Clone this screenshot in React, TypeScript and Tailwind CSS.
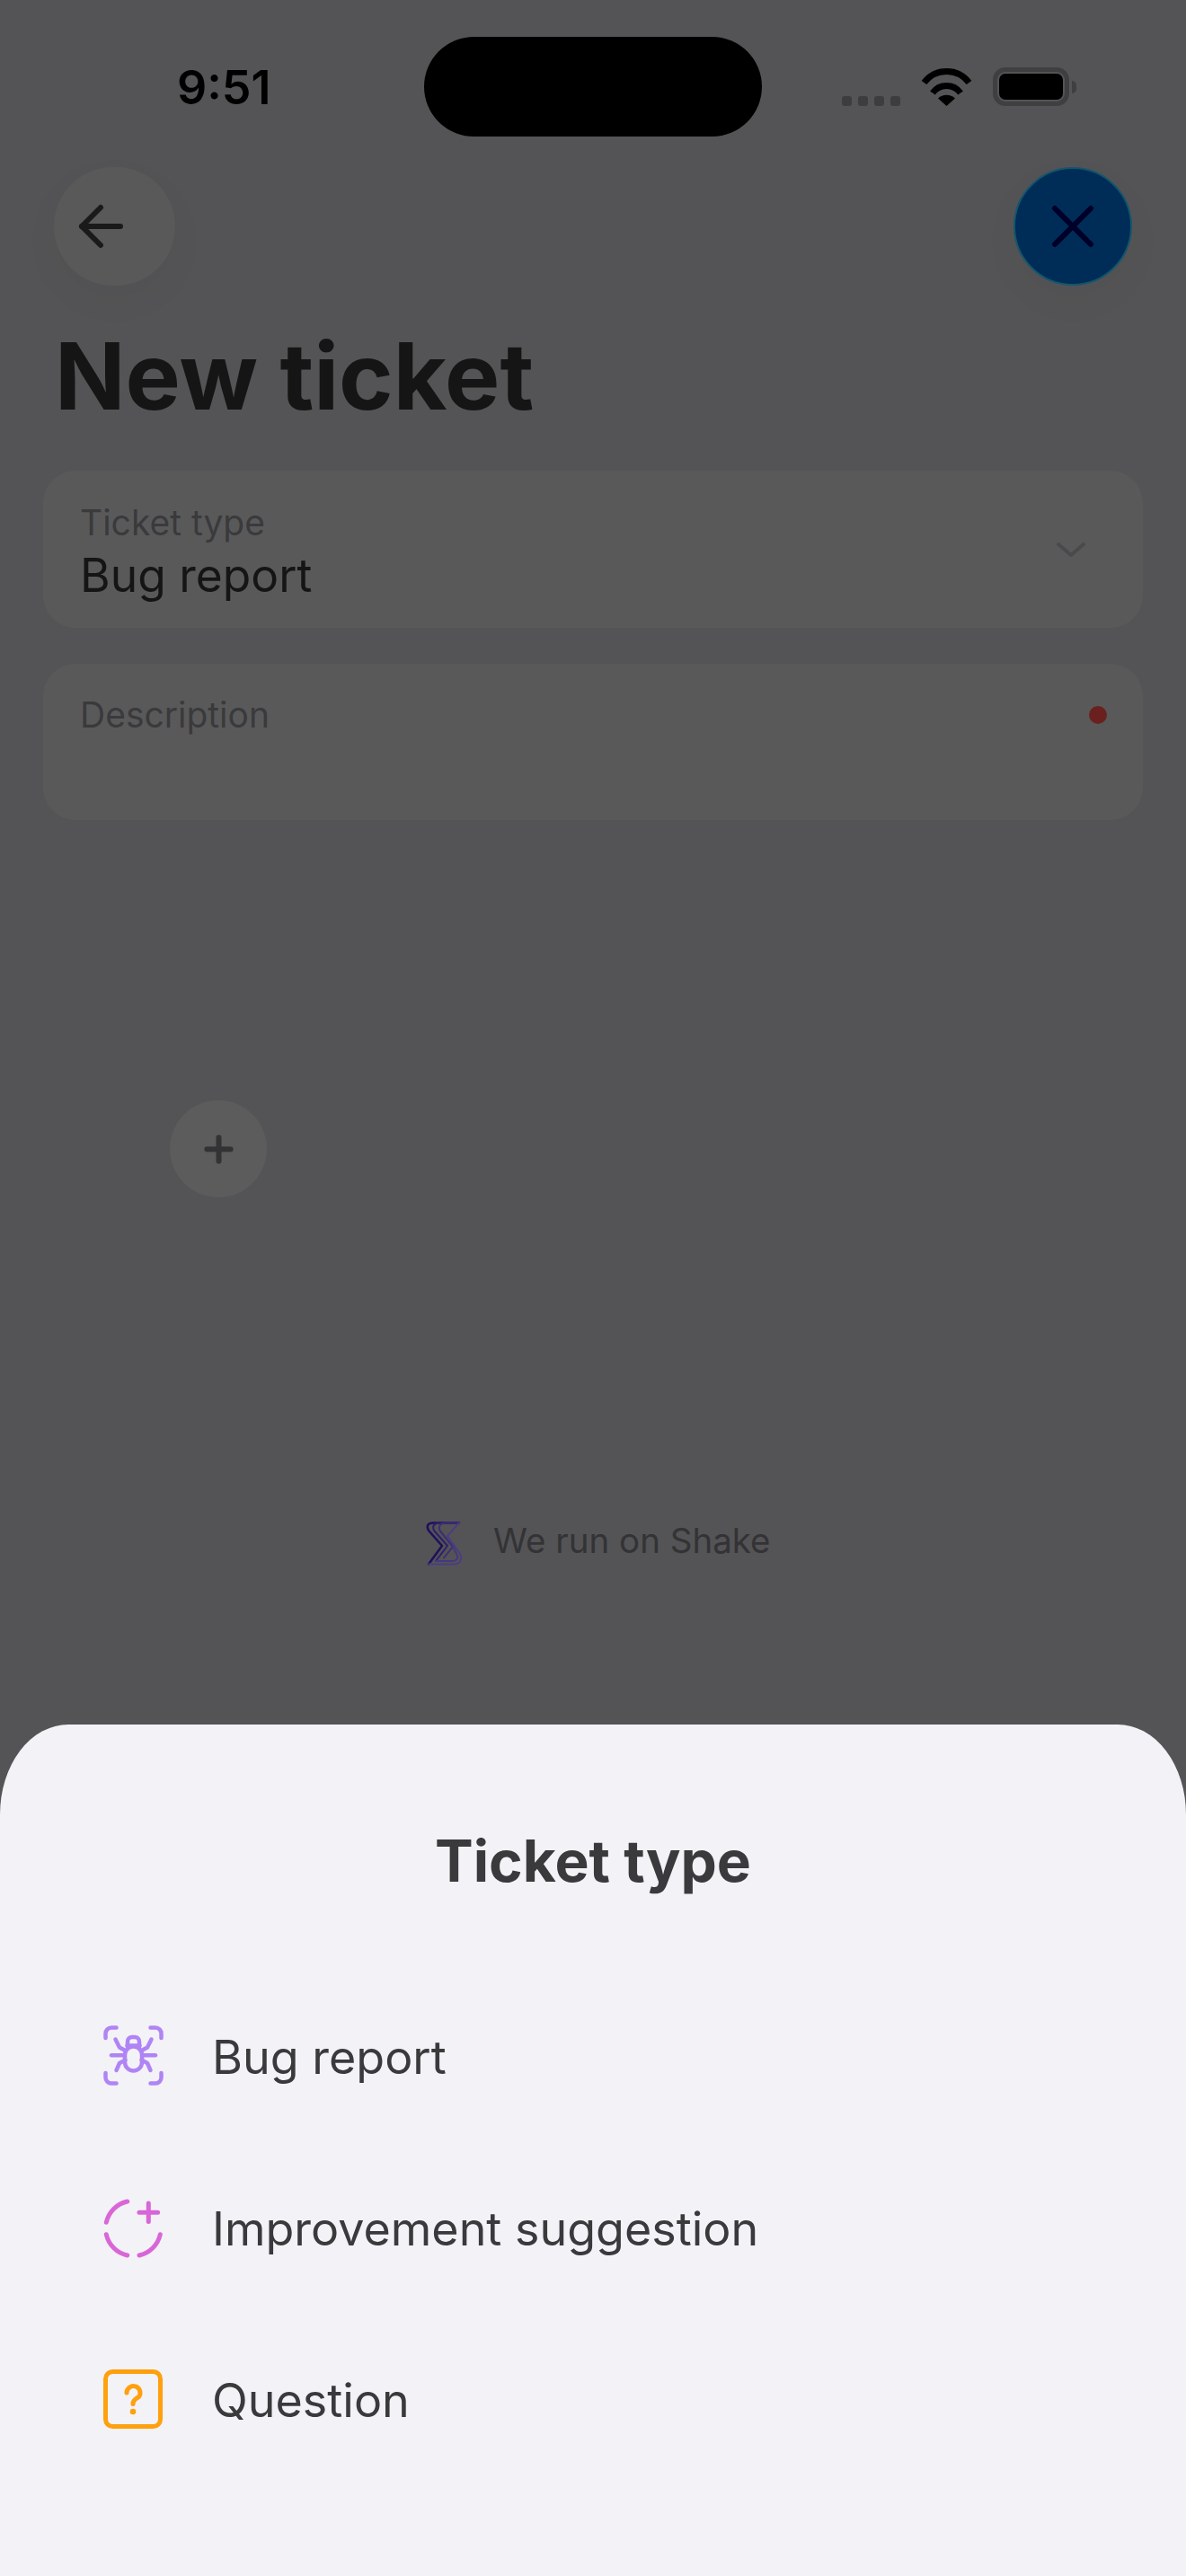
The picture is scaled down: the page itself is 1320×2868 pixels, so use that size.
import { Plus, X } from 'lucide-react';

function StatusBar() {
  return (
    <div className="flex items-start h-[186px] pt-[41px]">
      <span className="w-[472px] pl-[197px] pt-[31px] text-[52px] leading-[52px] font-semibold text-black">9:51</span>
      <div className="w-[376px] h-[111px] rounded-[56px] bg-black" />
      <div className="flex items-end gap-[23px] pl-[89px] pt-[34px]">
        <div className="flex gap-[7px]">
          <span className="w-[11px] h-[11px] rounded-[3px] bg-[#3d3d3f]" />
          <span className="w-[11px] h-[11px] rounded-[3px] bg-[#3d3d3f]" />
          <span className="w-[11px] h-[11px] rounded-[3px] bg-[#3d3d3f]" />
          <span className="w-[11px] h-[11px] rounded-[3px] bg-[#3d3d3f]" />
        </div>
        <svg width="57" height="42" viewBox="0 0 57 42" fill="none">
          <path d="M3.5 16 A31.25 31.25 0 0 1 53.5 16" stroke="#000" strokeWidth="7" />
          <path d="M13 27.5 A19 19 0 0 1 44 27.5" stroke="#000" strokeWidth="7" />
          <path d="M28.5 42 L19 33.5 A14 14 0 0 1 38 33.5 Z" fill="#000" />
        </svg>
        <div className="flex items-center gap-[3px]">
          <div className="w-[85px] h-[43px] rounded-[14px] border-[5px] border-[#3f3f41] p-[2px]">
            <div className="w-full h-full rounded-[7px] bg-black" />
          </div>
          <span className="w-[5px] h-[14px] rounded-r-full bg-[#3f3f41]" />
        </div>
      </div>
    </div>
  );
}

function BugIcon() {
  return (
    <svg width="67" height="67" viewBox="0 0 67 67" fill="none" stroke="#b084f5" strokeWidth="4.5" strokeLinecap="round" strokeLinejoin="round">
      <path d="M2.5 14 V9 a6.5 6.5 0 0 1 6.5-6.5 H14.5" />
      <path d="M52.5 2.5 H58 a6.5 6.5 0 0 1 6.5 6.5 V14" />
      <path d="M2.5 53 V58 a6.5 6.5 0 0 0 6.5 6.5 H14.5" />
      <path d="M52.5 64.5 H58 a6.5 6.5 0 0 0 6.5-6.5 V53" />
      <path d="M27 24 V18 a5 5 0 0 1 5-5 h3 a5 5 0 0 1 5 5 V24" />
      <path d="M26.5 22.5 H40.5" />
      <path d="M24 33 a9.5 9.5 0 0 1 19 0 v8 a9.5 9.5 0 0 1 -19 0 Z" />
      <path d="M13.5 15.5 L18 24.5 L24.5 28" />
      <path d="M53.5 15.5 L49 24.5 L42.5 28" />
      <path d="M9 33.2 H23.5" />
      <path d="M43.5 33.2 H58" />
      <path d="M14.5 50 L18 42 L24.5 38.5" />
      <path d="M52.5 50 L49 42 L42.5 38.5" />
    </svg>
  );
}

function SuggestionIcon() {
  return (
    <svg width="72" height="72" viewBox="0 0 72 72" fill="none" stroke="#d966d6" strokeWidth="5" strokeLinecap="round">
      <path d="M29.7 7 A30.7 30.7 0 0 0 6.3 30.3" />
      <path d="M6.3 43.7 A30.7 30.7 0 0 0 29.7 67" />
      <path d="M43 67 A30.7 30.7 0 0 0 66.3 43.7" />
      <path d="M43 19.3 H63.6" />
      <path d="M53.3 9 V29.6" />
    </svg>
  );
}

function QuestionIcon() {
  return (
    <svg width="66" height="66" viewBox="0 0 66 66" fill="none" stroke="#ffa00f" strokeWidth="5" strokeLinecap="round">
      <rect x="2.5" y="2.5" width="61" height="61" rx="8" />
      <path d="M26 26 A7.5 7.5 0 1 1 39.5 30.5 Q33 34 33 38.5" />
      <circle cx="33" cy="47" r="3.3" fill="#ffa00f" stroke="none" />
    </svg>
  );
}

function ShakeLogo() {
  return (
    <svg width="60" height="60" viewBox="0 0 60 60" fill="none" strokeLinejoin="round" strokeLinecap="round">
      {/* nested chevrons, darker towards the top left */}
      <path d="M46 10.5 H17 Q8 11 12 19 L27 36 L12 56.5" stroke="#20105c" strokeWidth="2.6" />
      <path d="M46 10.5 H23 Q15 12 18 19 L33 36 L20 53" stroke="#2f1f69" strokeWidth="2" />
      <path d="M46 10.5 H29 Q22 13 24.5 19 L39 37 L29 49.5" stroke="#3d2e75" strokeWidth="2" />
      {/* lower right curves */}
      <path d="M12 56.5 H41 Q51 55 47 45 L33 25 L46 10.5" stroke="#4b3d82" strokeWidth="2" />
      <path d="M20 53 H39 Q46 52 43.5 46 L39 37" stroke="#46387e" strokeWidth="2" />
    </svg>
  );
}

const ROWS = [
  { label: 'Bug report', icon: <BugIcon /> },
  { label: 'Improvement suggestion', icon: <SuggestionIcon /> },
  { label: 'Question', icon: <QuestionIcon /> },
];

export default function App() {
  return (
    <div className='flex flex-col h-[2868px] bg-[#545456] font-["Inter",sans-serif]'>
      <StatusBar />
      {/* Nav buttons */}
      <div className="flex justify-between pl-[60px] pr-[60px]">
        <button className="w-[135px] h-[132px] rounded-full bg-[#59595a] flex items-center pl-[27px] shadow-[0_16px_48px_rgba(0,0,0,0.03)]">
          <svg width="50" height="50" viewBox="0 0 50 50" fill="none" stroke="#1a1a1a" strokeWidth="6" strokeLinecap="round" strokeLinejoin="round">
            <path d="M4 25 H47" />
            <path d="M25 4 L4 25 L25 46" />
          </svg>
        </button>
        <button className="w-[132px] h-[132px] rounded-full bg-[#002d58] border-2 border-[#14566c] flex items-center justify-center text-[#000028] shadow-[0_16px_48px_rgba(0,0,0,0.03)]">
          <X size={80} strokeWidth={1.8} />
        </button>
      </div>
      <h1 className="pl-[61px] mt-[41px] text-[103px] leading-[120px] font-bold text-[#151515]">New ticket</h1>
      {/* Form */}
      <div className="flex flex-col gap-[40px] px-[48px] mt-[45px]">
        <div className="h-[175px] rounded-[36px] bg-[#59595a] flex items-center justify-between pl-[41px] pr-[63px]">
          <div className="flex flex-col pt-[7px]">
            <span className="text-[39px] leading-[46px] text-[#3a3a3c]">Ticket type</span>
            <span className="mt-[4px] text-[51.5px] leading-[62px] text-[#151515]">Bug report</span>
          </div>
          <svg width="34" height="18" viewBox="0 0 34 18" fill="none" stroke="#4a4a4c" strokeWidth="4" strokeLinecap="round" strokeLinejoin="round">
            <path d="M3 3 L17 15 L31 3" />
          </svg>
        </div>
        <div className="h-[174px] rounded-[36px] bg-[#59595a] flex items-start justify-between pl-[41px] pr-[40px] pt-[34px]">
          <span className="text-[39px] leading-[46px] text-[#3a3a3c]">Description</span>
          <span className="w-[20px] h-[20px] mt-[13px] rounded-full bg-[#6b2020]" />
        </div>
      </div>
      <div className="pl-[189px] mt-[312px]">
        <div className="w-[108px] h-[108px] rounded-full bg-[#5c5c5d] flex items-center justify-center text-[#333335]">
          <Plus size={45} strokeWidth={3.2} />
        </div>
      </div>
      {/* Footer brand */}
      <div className="flex items-center pl-[465px] h-[60px] mt-[352px]">
        <ShakeLogo />
        <span className="ml-[24px] text-[38.5px] leading-[46px] text-[#333335]">We run on Shake</span>
      </div>
      {/* Bottom sheet */}
      <div className="mt-auto h-[948px] rounded-tl-[76px_100px] rounded-tr-[76px_100px] bg-[#f2f2f7] text-[#3a3a3c]">
        <h2 className="pt-[114px] text-center text-[64px] leading-[76px] font-bold">Ticket type</h2>
        <div className="flex flex-col mt-[83px]">
          {ROWS.map((row) => (
            <div key={row.label} className="flex items-center h-[191px] pl-[112px]">
              <div className="w-[72px] flex items-center justify-center">{row.icon}</div>
              <span className="ml-[52px] pt-[4px] text-[52px] leading-[62px]">{row.label}</span>
            </div>
          ))}
        </div>
      </div>
    </div>
  );
}
